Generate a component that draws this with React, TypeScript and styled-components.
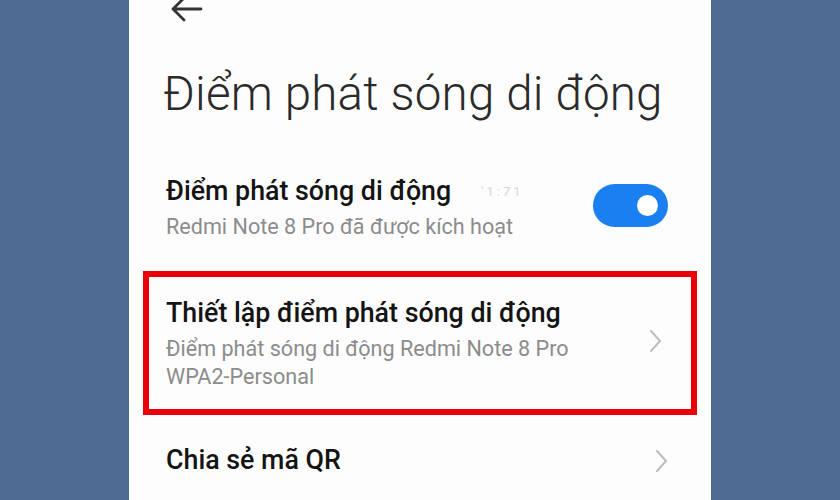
import React from "react";
import styled, { createGlobalStyle } from "styled-components";

const GlobalStyle = createGlobalStyle`
  html, body {
    margin: 0;
    padding: 0;
    background: #4e6b93;
  }
  body {
    font-family: Roboto, "Noto Sans", "DejaVu Sans", sans-serif;
  }
`;

const Screen = styled.div`
  width: 582px;
  height: 500px;
  margin: 0 auto;
  background: #fdfdfd;
  overflow: hidden;
  padding: 0 14px;
  box-sizing: border-box;
`;

const Header = styled.div`
  height: 20px;
  padding-left: 26px;
  display: flex;
  align-items: flex-start;
`;

const PageTitle = styled.h1`
  margin: 45px 0 0 20px;
  font-size: 47.5px;
  line-height: 58px;
  font-weight: 300;
  color: #2b2b2b;
  letter-spacing: 0.2px;
`;

const Row = styled.div<{ $highlight?: boolean }>`
  display: flex;
  align-items: center;
  gap: 16px;
  box-sizing: border-box;
  padding: ${(p) => (p.$highlight ? "20px 29px 18px 17px" : "0 29px 0 23px")};
  border: ${(p) => (p.$highlight ? "6px solid #ea0008" : "none")};
`;

const RowText = styled.div`
  flex: 1;
  display: flex;
  flex-direction: column;
  gap: 5px;
`;

const RowTitle = styled.div`
  font-size: 26.8px;
  line-height: 33px;
  font-weight: 500;
  color: #141414;
  display: flex;
  align-items: center;
`;

const RowSub = styled.div`
  font-size: 21.6px;
  line-height: 28px;
  color: #8c8c8c;
`;

const Ghost = styled.span`
  margin-left: 30px;
  font-size: 13px;
  font-weight: 400;
  color: #d6d6d6;
  letter-spacing: 3px;
`;

const Toggle = styled.div`
  width: 75px;
  height: 43px;
  border-radius: 22px;
  background: #1a80f2;
  position: relative;
  flex-shrink: 0;
  margin-bottom: 6px;

  &::after {
    content: "";
    position: absolute;
    width: 21px;
    height: 21px;
    border-radius: 50%;
    background: #ffffff;
    right: 10px;
    top: 11px;
  }
`;

const ChevronBox = styled.div<{ $lift?: number }>`
  display: flex;
  flex-shrink: 0;
  margin-bottom: ${(p) => (p.$lift ? p.$lift * 2 : 0)}px;
`;

const Chevron = ({ lift }: { lift?: number }) => (
  <ChevronBox $lift={lift}>
    <svg width="13" height="24" viewBox="0 0 13 24" fill="none">
      <path d="M2 2 L11 12 L2 22" stroke="#bdbdbd" strokeWidth="2" strokeLinecap="round" strokeLinejoin="round" />
    </svg>
  </ChevronBox>
);

const BackArrow = () => (
  <svg width="36" height="22" viewBox="0 0 36 22" fill="none">
    <path d="M32 9 H4 M15 -2 L4 9 L15 20" stroke="#333" strokeWidth="2.8" strokeLinecap="round" strokeLinejoin="round" />
  </svg>
);

export default function App() {
  return (
    <>
      <GlobalStyle />
      <Screen>
        <Header>
          <BackArrow />
        </Header>
        <PageTitle>Điểm phát sóng di động</PageTitle>

        <Row style={{ marginTop: 52 }}>
          <RowText>
            <RowTitle>
              Điểm phát sóng di động<Ghost>'1:71</Ghost>
            </RowTitle>
            <RowSub>Redmi Note 8 Pro đã được kích hoạt</RowSub>
          </RowText>
          <Toggle />
        </Row>

        <Row $highlight style={{ marginTop: 30 }}>
          <RowText>
            <RowTitle>Thiết lập điểm phát sóng di động</RowTitle>
            <RowSub>
              Điểm phát sóng di động Redmi Note 8 Pro
              <br />
              WPA2-Personal
            </RowSub>
          </RowText>
          <Chevron lift={3} />
        </Row>

        <Row style={{ marginTop: 29 }}>
          <RowText>
            <RowTitle>Chia sẻ mã QR</RowTitle>
          </RowText>
          <Chevron />
        </Row>
      </Screen>
    </>
  );
}
